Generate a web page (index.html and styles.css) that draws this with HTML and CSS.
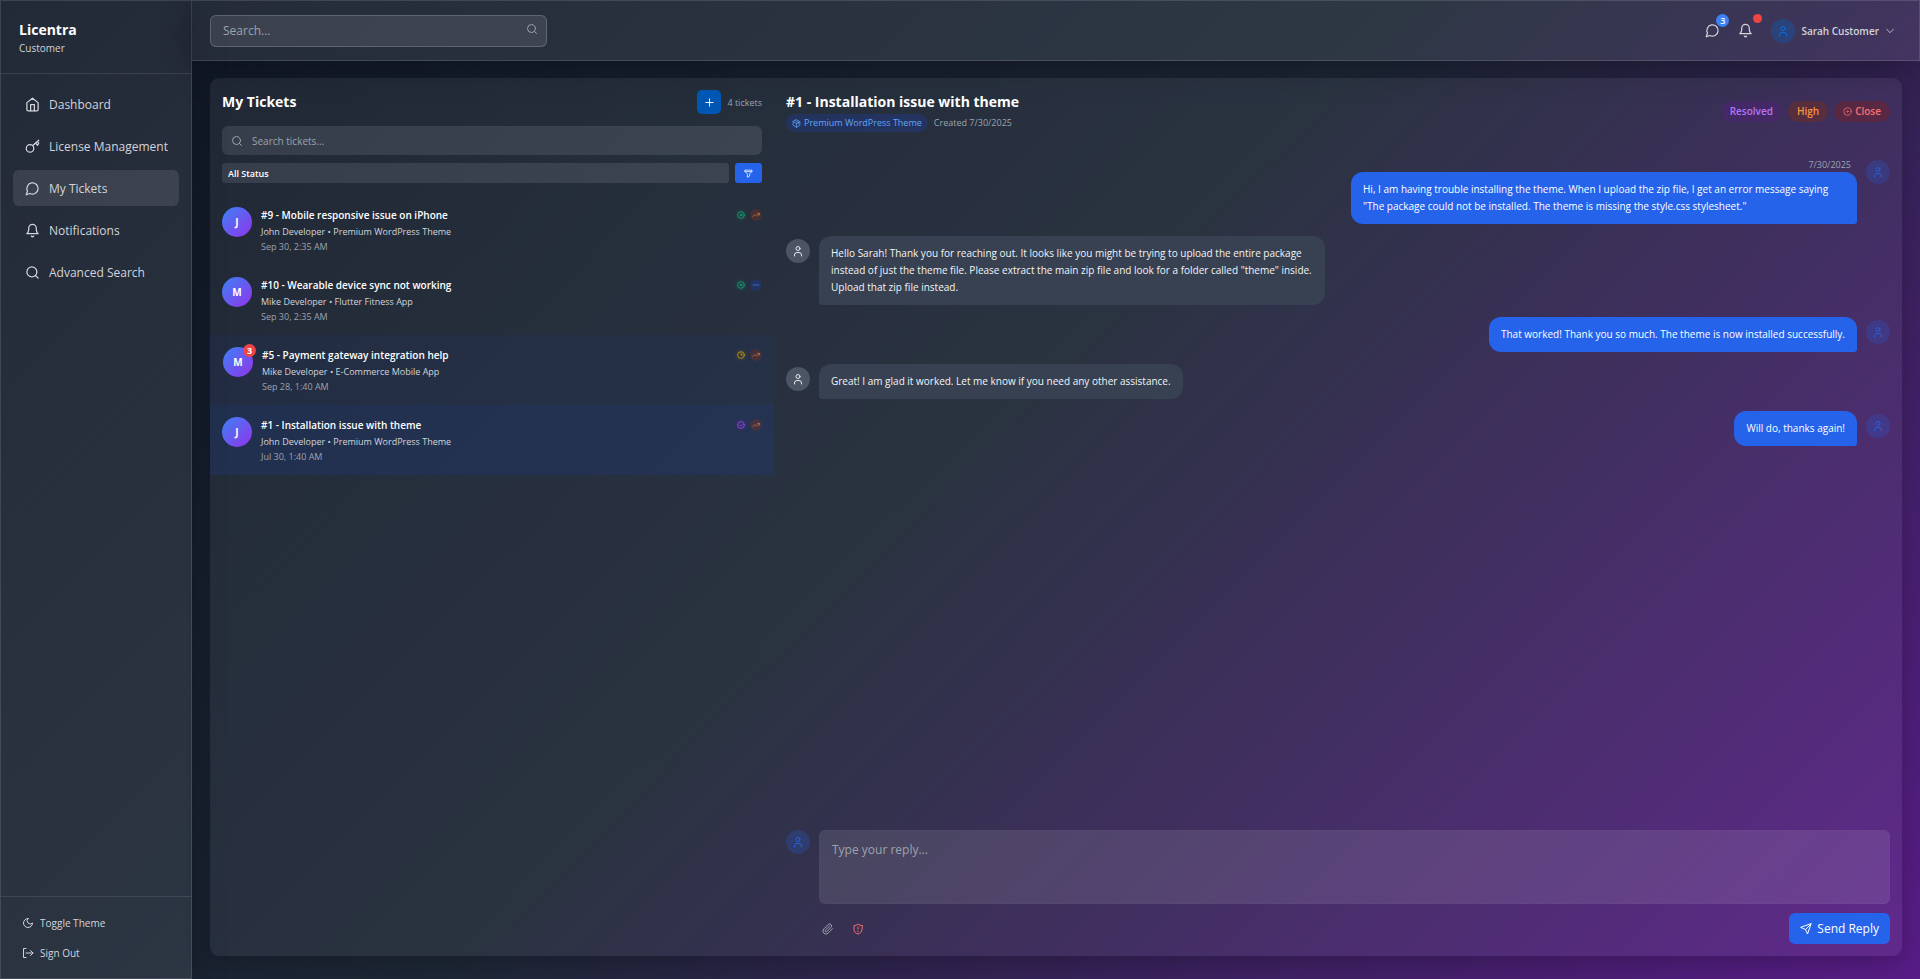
FILE: index.html
```html
<!DOCTYPE html>
<html lang="en">
<head>
  <meta charset="UTF-8" />
  <meta name="viewport" content="width=device-width, initial-scale=1.0"/>
  <title>Licentra - My Tickets</title>
  <link rel="stylesheet" href="styles.css">
</head>
<body>
  <!-- Icons used more than once -->
  <svg class="sprite" aria-hidden="true">
    <symbol id="i-search" viewBox="0 0 24 24"><circle cx="11" cy="11" r="8"/><path d="m21 21-4.300-4.300"/></symbol>
    <symbol id="i-chat" viewBox="0 0 24 24"><path d="M7.900 20A9 9 0 1 0 4 16.100L2 22Z"/></symbol>
    <symbol id="i-bell" viewBox="0 0 24 24"><path d="M6 8a6 6 0 0 1 12 0c0 7 3 9 3 9H3s3-2 3-9"/><path d="M10.300 21a1.940 1.940 0 0 0 3.400 0"/></symbol>
    <symbol id="i-user" viewBox="0 0 24 24"><circle cx="12" cy="7" r="4"/><path d="M5 22v-2a5 5 0 0 1 5-5h4a5 5 0 0 1 5 5v2"/></symbol>
    <symbol id="i-trend" viewBox="0 0 24 24"><path d="m22 7-8.500 8.500-5-5L2 17"/><path d="M16 7h6v6"/></symbol>
    <symbol id="i-dot" viewBox="0 0 24 24"><circle cx="12" cy="12" r="10"/><circle cx="12" cy="12" r="2"/></symbol>
    <symbol id="i-open" viewBox="0 0 24 24"><circle cx="12" cy="12" r="10"/><circle cx="12" cy="12" r="3"/></symbol>
  </svg>

  <div class="app">

    <!-- Sidebar -->
    <aside class="sidebar">
      <div class="brand">
        <h1>Licentra</h1>
        <p>Customer</p>
      </div>
      <nav class="nav">
        <a href="#"><svg viewBox="0 0 24 24"><path d="m3 9 9-7 9 7v11a2 2 0 0 1-2 2H5a2 2 0 0 1-2-2z"/><path d="M9 22V12h6v10"/></svg>Dashboard</a>
        <a href="#"><svg viewBox="0 0 24 24"><circle cx="8" cy="15" r="6"/><path d="M12.500 10.500 22 2M17 6l3 4 2-3-2-3"/></svg>License Management</a>
        <a href="#" class="active"><svg><use href="#i-chat"/></svg>My Tickets</a>
        <a href="#"><svg><use href="#i-bell"/></svg>Notifications</a>
        <a href="#"><svg><use href="#i-search"/></svg>Advanced Search</a>
      </nav>
      <div class="sidebar-footer">
        <button type="button"><svg viewBox="0 0 24 24"><path d="M12 3a6 6 0 0 0 9 9 9 9 0 1 1-9-9Z"/></svg>Toggle Theme</button>
        <button type="button"><svg viewBox="0 0 24 24"><path d="M8 3H3v18h5M8 12h14M17 7l5 5-5 5"/></svg>Sign Out</button>
      </div>
    </aside>

    <div class="content">

      <!-- Top bar -->
      <header class="topbar">
        <div class="global-search">
          <input type="text" placeholder="Search..." aria-label="Search">
          <svg><use href="#i-search"/></svg>
        </div>
        <div class="top-actions">
          <button type="button" class="icon-btn" aria-label="Messages"><svg><use href="#i-chat"/></svg><span class="count">3</span></button>
          <button type="button" class="icon-btn" aria-label="Notifications"><svg><use href="#i-bell"/></svg><span class="alert"></span></button>
          <button type="button" class="profile">
            <span class="user-icon"><svg><use href="#i-user"/></svg></span>
            Sarah Customer
            <svg class="chevron" viewBox="0 0 24 24"><path d="m4 8 8 8 8-8"/></svg>
          </button>
        </div>
      </header>

      <main class="panel">

        <!-- Left: ticket list -->
        <section class="tickets">
          <div class="tickets-top">
            <div class="tickets-title">
              <h2>My Tickets</h2>
              <button type="button" class="add-btn" aria-label="New ticket"><svg viewBox="0 0 24 24"><path d="M12 4v16M4 12h16"/></svg></button>
              <span>4 tickets</span>
            </div>
            <div class="ticket-search">
              <svg><use href="#i-search"/></svg>
              <input type="text" placeholder="Search tickets..." aria-label="Search tickets">
            </div>
            <div class="filters">
              <select aria-label="Status"><option>All Status</option></select>
              <button type="button" aria-label="Filter"><svg viewBox="0 0 24 24"><path d="M3 3h18v4l-6 6v6l-6 3v-9L3 7zM3 7h18"/></svg></button>
            </div>
          </div>

          <div class="ticket">
            <div class="avatar">J</div>
            <div class="ticket-info">
              <h3>#9 - Mobile responsive issue on iPhone</h3>
              <p>John Developer • Premium WordPress Theme</p>
              <time>Sep 30, 2:35 AM</time>
            </div>
            <div class="marks"><span class="green"><svg><use href="#i-open"/></svg></span><span class="orange"><svg><use href="#i-trend"/></svg></span></div>
          </div>
          <div class="ticket">
            <div class="avatar">M</div>
            <div class="ticket-info">
              <h3>#10 - Wearable device sync not working</h3>
              <p>Mike Developer • Flutter Fitness App</p>
              <time>Sep 30, 2:35 AM</time>
            </div>
            <div class="marks"><span class="green"><svg><use href="#i-open"/></svg></span><span class="blue"><svg viewBox="0 0 24 24"><path d="M3 12h18"/></svg></span></div>
          </div>
          <div class="ticket unread">
            <div class="avatar">M<span class="unread-count">3</span></div>
            <div class="ticket-info">
              <h3>#5 - Payment gateway integration help</h3>
              <p>Mike Developer • E-Commerce Mobile App</p>
              <time>Sep 28, 1:40 AM</time>
            </div>
            <div class="marks"><span class="yellow"><svg viewBox="0 0 24 24"><circle cx="12" cy="12" r="10"/><path d="M12 6v6h5"/></svg></span><span class="orange"><svg><use href="#i-trend"/></svg></span></div>
          </div>
          <div class="ticket selected">
            <div class="avatar">J</div>
            <div class="ticket-info">
              <h3>#1 - Installation issue with theme</h3>
              <p>John Developer • Premium WordPress Theme</p>
              <time>Jul 30, 1:40 AM</time>
            </div>
            <div class="marks"><span class="purple"><svg viewBox="0 0 24 24"><circle cx="12" cy="12" r="10"/><path d="m8 12 3 3 5-5"/></svg></span><span class="orange"><svg><use href="#i-trend"/></svg></span></div>
          </div>
        </section>

        <!-- Right: conversation -->
        <section class="chat">
          <div class="chat-header">
            <div>
              <h2>#1 - Installation issue with theme</h2>
              <div class="chat-meta">
                <span class="product"><svg viewBox="0 0 24 24"><path d="m12 2 9 5v10l-9 5-9-5V7zM3 7l9 5 9-5M12 12v10M8 4l9 5v4"/></svg>Premium WordPress Theme</span>
                <span>Created 7/30/2025</span>
              </div>
            </div>
            <div class="chat-tags">
              <span class="tag resolved">Resolved</span>
              <span class="tag high">High</span>
              <button type="button" class="tag close"><svg><use href="#i-dot"/></svg>Close</button>
            </div>
          </div>

          <div class="messages">
            <div class="message mine">
              <span class="user-icon"><svg><use href="#i-user"/></svg></span>
              <div class="message-body">
                <time>7/30/2025</time>
                <p>Hi, I am having trouble installing the theme. When I upload the zip file, I get an error message saying "The package could not be installed. The theme is missing the style.css stylesheet."</p>
              </div>
            </div>
            <div class="message">
              <span class="user-icon staff"><svg><use href="#i-user"/></svg></span>
              <div class="message-body">
                <p>Hello Sarah! Thank you for reaching out. It looks like you might be trying to upload the entire package instead of just the theme file. Please extract the main zip file and look for a folder called "theme" inside. Upload that zip file instead.</p>
              </div>
            </div>
            <div class="message mine">
              <span class="user-icon"><svg><use href="#i-user"/></svg></span>
              <div class="message-body">
                <p>That worked! Thank you so much. The theme is now installed successfully.</p>
              </div>
            </div>
            <div class="message">
              <span class="user-icon staff"><svg><use href="#i-user"/></svg></span>
              <div class="message-body">
                <p>Great! I am glad it worked. Let me know if you need any other assistance.</p>
              </div>
            </div>
            <div class="message mine">
              <span class="user-icon"><svg><use href="#i-user"/></svg></span>
              <div class="message-body">
                <p>Will do, thanks again!</p>
              </div>
            </div>
          </div>

          <form class="reply">
            <span class="user-icon"><svg><use href="#i-user"/></svg></span>
            <div class="reply-body">
              <textarea placeholder="Type your reply..." aria-label="Reply"></textarea>
              <div class="reply-actions">
                <button type="button" class="tool" aria-label="Attach file"><svg viewBox="0 0 24 24"><path d="m21.400 11.100-9.200 9.200a6 6 0 0 1-8.500-8.500l8.600-8.600a4 4 0 0 1 5.700 5.700l-8.600 8.500a2 2 0 0 1-2.800-2.800l8.500-8.500"/></svg></button>
                <button type="button" class="tool danger" aria-label="Sensitive data"><svg viewBox="0 0 24 24"><path d="M20 13c0 5-3.500 7.500-8 9-4.500-1.500-8-4-8-9V5c3 0 6-1 8-3 2 2 5 3 8 3zM12 8v4M12 16v1"/></svg></button>
                <button type="submit" class="send-btn"><svg viewBox="0 0 24 24"><path d="M22 2 15 22l-4-9-9-4zM22 2 11 13"/></svg>Send Reply</button>
              </div>
            </div>
          </form>
        </section>

      </main>
    </div>
  </div>
</body>
</html>
```
FILE: styles.css
```css
* {
  box-sizing: border-box;
}

body {
  margin: 0;
  font-family: "Segoe UI", "Open Sans", "Noto Sans", sans-serif;
  font-size: 12px;
  color: #fff;
  background: linear-gradient(135deg, #111827 0%, #1d2735 49%, #581c87 100%);
}

h1, h2, h3, p {
  margin: 0;
}

button, input, select, textarea {
  font-family: inherit;
  color: inherit;
  border: none;
  background: none;
  padding: 0;
  outline: none;
}

button {
  cursor: pointer;
}

svg {
  width: 15px;
  height: 15px;
  flex-shrink: 0;
  fill: none;
  stroke: currentColor;
  stroke-width: 2;
  stroke-linecap: round;
  stroke-linejoin: round;
}

.sprite {
  display: none;
}

.app {
  display: flex;
  min-height: 100vh;
}

/* Sidebar */
.sidebar {
  width: 192px;
  flex-shrink: 0;
  display: flex;
  flex-direction: column;
  background: rgba(255, 255, 255, 0.08);
  border: 1px solid rgba(255, 255, 255, 0.12);
  box-shadow: 0 8px 32px rgba(0, 0, 0, 0.3);
}

.brand {
  height: 73px;
  padding: 18px;
  border-bottom: 1px solid rgba(255, 255, 255, 0.1);
}

.brand h1 {
  font-size: 14px;
  line-height: 22px;
}

.brand p {
  font-size: 10px;
  line-height: 14px;
  color: #d1d5db;
}

.nav {
  flex: 1;
  display: flex;
  flex-direction: column;
  gap: 6px;
  padding: 12px;
}

.nav a {
  display: flex;
  align-items: center;
  gap: 9px;
  height: 36px;
  padding: 0 12px;
  border-radius: 6px;
  color: #d1d5db;
  font-size: 12px;
  text-decoration: none;
  white-space: nowrap;
}

.nav a.active {
  background: rgba(255, 255, 255, 0.1);
}

.sidebar-footer {
  height: 82px;
  padding: 11px 21px;
  border-top: 1px solid rgba(255, 255, 255, 0.1);
}

.sidebar-footer button {
  display: flex;
  align-items: center;
  gap: 6px;
  height: 30px;
  font-size: 10px;
  color: #d1d5db;
}

.sidebar-footer svg {
  width: 12px;
  height: 12px;
}

.content {
  flex: 1;
  min-width: 0;
  display: flex;
  flex-direction: column;
}

/* Top bar */
.topbar {
  display: flex;
  justify-content: space-between;
  align-items: center;
  height: 61px;
  padding: 0 24px 0 18px;
  background: rgba(255, 255, 255, 0.08);
  border: 1px solid rgba(255, 255, 255, 0.13);
  border-left: none;
  box-shadow: 0 8px 32px rgba(0, 0, 0, 0.3);
}

.global-search {
  position: relative;
  width: 337px;
}

.global-search input {
  width: 100%;
  height: 32px;
  padding: 0 36px 0 12px;
  border: 1px solid rgba(255, 255, 255, 0.18);
  border-radius: 6px;
  background: rgba(255, 255, 255, 0.1);
  font-size: 12px;
}

.global-search svg {
  position: absolute;
  right: 9px;
  top: 8px;
  width: 12px;
  height: 12px;
  color: #9ca3af;
}

::placeholder {
  color: #9ca3af;
  opacity: 1;
}

.top-actions {
  display: flex;
  align-items: center;
  color: #d1d5db;
}

.icon-btn {
  position: relative;
  display: flex;
  justify-content: center;
  width: 33px;
}

.count {
  position: absolute;
  top: -9px;
  right: 0;
  width: 13px;
  height: 13px;
  border-radius: 50%;
  background: #3b82f6;
  color: #fff;
  font-size: 9px;
  font-weight: 600;
  line-height: 13px;
}

.alert {
  position: absolute;
  top: -9px;
  right: 0;
  width: 9px;
  height: 9px;
  border-radius: 50%;
  background: #ef4444;
}

.profile {
  display: flex;
  align-items: center;
  gap: 6px;
  margin-left: 9px;
  font-size: 10px;
  font-weight: 600;
}

.profile .user-icon {
  background: rgba(0, 98, 204, 0.3);
  color: #0a6be0;
}

.chevron {
  width: 10px;
  height: 10px;
}

.user-icon {
  display: flex;
  justify-content: center;
  align-items: center;
  flex-shrink: 0;
  width: 24px;
  height: 24px;
  border-radius: 50%;
  background: rgba(37, 99, 235, 0.22);
  color: #2860d8;
}

.user-icon svg {
  width: 12px;
  height: 12px;
}

.user-icon.staff {
  background: #4b5563;
  color: #e5e7eb;
}

/* Main panel */
.panel {
  flex: 1;
  display: flex;
  margin: 17px 18px 23px;
  border-radius: 9px;
  background: rgba(255, 255, 255, 0.06);
  box-shadow: 0 8px 24px rgba(0, 0, 0, 0.2);
  overflow: hidden;
}

.tickets {
  width: 33.333%;
  flex-shrink: 0;
}

.tickets-top {
  height: 117px;
  padding: 12px;
}

.tickets-title {
  display: flex;
  align-items: center;
  gap: 6px;
  font-size: 9px;
  color: #9ca3af;
}

.tickets-title h2 {
  flex: 1;
  font-size: 14px;
  line-height: 24px;
  color: #fff;
}

.add-btn {
  display: flex;
  justify-content: center;
  align-items: center;
  width: 24px;
  height: 24px;
  border-radius: 5px;
  background: #0056b3;
  color: #fff;
}

.add-btn svg {
  width: 11px;
  height: 11px;
}

.ticket-search {
  display: flex;
  align-items: center;
  gap: 9px;
  height: 29px;
  margin-top: 12px;
  padding: 0 9px;
  border-radius: 6px;
  background: rgba(255, 255, 255, 0.1);
  color: #9ca3af;
}

.ticket-search svg {
  width: 12px;
  height: 12px;
}

.ticket-search input {
  flex: 1;
  font-size: 10px;
}

.filters {
  display: flex;
  gap: 6px;
  height: 20px;
  margin-top: 8px;
}

.filters select {
  flex: 1;
  appearance: none;
  padding: 0 6px;
  border-radius: 3px;
  background: rgba(255, 255, 255, 0.1);
  font-size: 9px;
  font-weight: 600;
}

.filters option {
  color: #000;
}

.filters button {
  display: flex;
  justify-content: center;
  align-items: center;
  width: 27px;
  border-radius: 3px;
  background: #2563eb;
}

.filters svg {
  width: 9px;
  height: 9px;
}

.ticket {
  display: flex;
  gap: 9px;
  height: 70px;
  padding: 12px;
}

.ticket.unread {
  background: rgba(30, 64, 175, 0.08);
  border-left: 1px solid rgba(30, 64, 175, 0.05);
}

.ticket.selected {
  background: rgba(30, 64, 175, 0.18);
}

.avatar {
  position: relative;
  width: 30px;
  height: 30px;
  border-radius: 50%;
  background: linear-gradient(135deg, #3b82f6, #9333ea);
  font-size: 10px;
  font-weight: 700;
  line-height: 30px;
  text-align: center;
}

.unread-count {
  position: absolute;
  top: -3px;
  right: -3px;
  width: 13px;
  height: 13px;
  border-radius: 50%;
  background: #ef4444;
  font-size: 9px;
  line-height: 13px;
}

.ticket-info {
  flex: 1;
}

.ticket-info h3 {
  font-size: 10px;
  font-weight: 600;
  line-height: 17px;
}

.ticket-info p {
  font-size: 9px;
  line-height: 16px;
  color: #d1d5db;
}

.ticket-info time {
  display: block;
  font-size: 9px;
  line-height: 14px;
  color: #9ca3af;
}

.marks {
  display: flex;
  gap: 3px;
  height: 12px;
  margin-top: 2px;
}

.marks span {
  display: flex;
  justify-content: center;
  align-items: center;
  width: 12px;
  height: 12px;
  border-radius: 50%;
}

.marks svg {
  width: 8px;
  height: 8px;
}

.green {
  background: rgba(16, 185, 129, 0.08);
  color: #10b981;
}

.orange {
  background: rgba(154, 52, 18, 0.25);
  color: #ea7a2c;
}

.blue {
  background: rgba(30, 64, 175, 0.3);
  color: #3b82f6;
}

.yellow {
  background: rgba(202, 138, 4, 0.08);
  color: #eab308;
}

.purple {
  background: rgba(126, 34, 206, 0.15);
  color: #a855f7;
}

/* Conversation */
.chat {
  flex: 1;
  min-width: 0;
  display: flex;
  flex-direction: column;
}

.chat-header {
  display: flex;
  justify-content: space-between;
  align-items: center;
  padding: 12px 12px 13px;
}

.chat-header h2 {
  font-size: 14px;
  line-height: 24px;
}

.chat-meta {
  display: flex;
  align-items: center;
  gap: 6px;
  font-size: 9px;
  line-height: 18px;
  color: #9ca3af;
}

.product {
  display: flex;
  align-items: center;
  gap: 3px;
  padding: 0 6px;
  border-radius: 9px;
  background: rgba(30, 64, 175, 0.3);
  color: #60a5fa;
  font-weight: 500;
}

.product svg {
  width: 9px;
  height: 9px;
}

.chat-tags {
  display: flex;
  gap: 6px;
}

.tag {
  display: flex;
  align-items: center;
  gap: 3px;
  height: 21px;
  padding: 0 9px;
  border-radius: 11px;
  font-size: 10px;
  font-weight: 600;
}

.tag svg {
  width: 9px;
  height: 9px;
}

.resolved {
  background: rgba(88, 28, 135, 0.3);
  color: #b475f5;
}

.high {
  background: rgba(124, 45, 18, 0.4);
  color: #fb923c;
}

.close {
  background: rgba(127, 29, 29, 0.4);
  color: #f87171;
}

.messages {
  flex: 1;
  display: flex;
  flex-direction: column;
  gap: 12px;
  padding: 12px;
}

.message {
  display: flex;
  align-items: flex-start;
  gap: 9px;
}

.message.mine {
  flex-direction: row-reverse;
}

.message .user-icon {
  margin-top: 3px;
}

.message-body {
  max-width: 506px;
}

.message-body time {
  display: block;
  padding: 0 6px;
  font-size: 9px;
  line-height: 15px;
  color: #9ca3af;
  text-align: right;
}

.message-body p {
  padding: 9px 12px;
  border-radius: 12px 12px 12px 3px;
  background: #374151;
  font-size: 10px;
  line-height: 17px;
  color: #f3f4f6;
}

.mine .message-body p {
  border-radius: 12px 12px 3px 12px;
  background: #2563eb;
  color: #fff;
}

.reply {
  display: flex;
  gap: 9px;
  padding: 12px;
}

.reply-body {
  flex: 1;
}

.reply textarea {
  display: block;
  width: 100%;
  height: 74px;
  padding: 10px 12px;
  border: 1px solid rgba(255, 255, 255, 0.02);
  border-radius: 6px;
  background: rgba(255, 255, 255, 0.1);
  font-size: 12px;
  resize: none;
}

.reply-actions {
  display: flex;
  align-items: center;
  gap: 12px;
  margin-top: 9px;
}

.tool {
  display: flex;
  justify-content: center;
  width: 18px;
  color: #9ca3af;
}

.tool svg {
  width: 12px;
  height: 12px;
}

.tool.danger {
  color: #f87171;
}

.send-btn {
  display: flex;
  align-items: center;
  gap: 5px;
  height: 31px;
  margin-left: auto;
  padding: 0 11px;
  border-radius: 6px;
  background: #2563eb;
  color: #fff;
  font-size: 12px;
}

.send-btn svg {
  width: 12px;
  height: 12px;
}
```
